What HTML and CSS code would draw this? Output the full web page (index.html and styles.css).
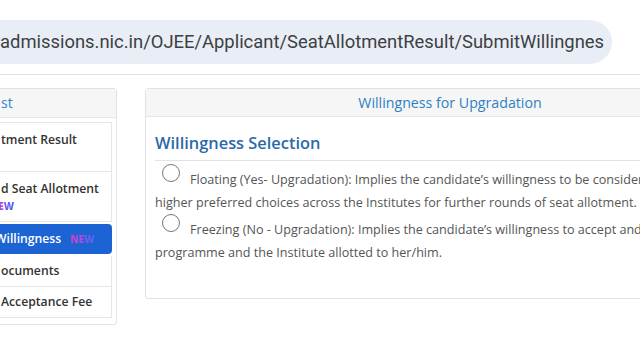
FILE: index.html
```html
<!DOCTYPE html>
<html lang="en">
<head>
  <meta charset="UTF-8">
  <meta name="viewport" content="width=device-width, initial-scale=1.0">
  <title>Submit Willingness</title>
  <link rel="stylesheet" href="styles.css">
</head>
<body>
  <div class="urlbar">
    <span class="url">admissions.nic.in/OJEE/Applicant/SeatAllotmentResult/SubmitWillingnes</span>
  </div>
  <div class="divider"></div>

  <div class="page">
    <aside class="menu">
      <div class="menu-head">st</div>
      <ul class="menu-list">
        <li class="menu-item tall">tment Result</li>
        <li class="menu-item tall">d Seat Allotment<br><span class="badge cut">NEW</span></li>
        <li class="menu-item active"><span class="cut-w">Willingness</span> <span class="badge">NEW</span></li>
        <li class="menu-item">ocuments</li>
        <li class="menu-item">Acceptance Fee</li>
      </ul>
    </aside>

    <section class="card">
      <div class="card-head">Willingness for Upgradation</div>
      <div class="card-body">
        <h3 class="title">Willingness Selection</h3>
        <p class="option">
          <span class="radio"></span>
          Floating (Yes- Upgradation): Implies the candidate’s willingness to be considered for<br>
          higher preferred choices across the Institutes for further rounds of seat allotment.
        </p>
        <p class="option">
          <span class="radio"></span>
          Freezing (No - Upgradation): Implies the candidate’s willingness to accept and retain the<br>
          programme and the Institute allotted to her/him.
        </p>
      </div>
    </section>
  </div>
</body>
</html>
```

FILE: styles.css
```css
* {
  margin: 0;
  padding: 0;
  box-sizing: border-box;
}
html, body {
  width: 640px;
  height: 360px;
  overflow: hidden;
  background: #fff;
}

/* 地址栏 */
.urlbar {
  margin: 20px 0 0 -40px;
  width: 652px;
  height: 44px;
  padding-left: 40px;
  border-radius: 22px;
  background: #e9eef6;
  font: 18.4px/44px Roboto, "Liberation Sans", sans-serif;
  color: #3c4043;
  white-space: nowrap;
}
.divider {
  margin-top: 10px;
  height: 1px;
  background: #dfe1e5;
}

.page {
  display: flex;
  align-items: flex-start;
  gap: 28px;
  padding-top: 13px;
  font-family: "Open Sans", "Noto Sans", sans-serif;
}

/* 左侧菜单 */
.menu {
  flex: none;
  margin-left: -10px;
  width: 127px;
  border: 1px solid #e2e2e2;
  border-radius: 3px;
  white-space: nowrap;
}
.menu-head {
  height: 29px;
  padding-left: 10px;
  font-size: 14px;
  line-height: 27px;
  color: #3585cc;
  background: #f6f6f6;
  border-bottom: 1px solid #e6e6e6;
}
.menu-list {
  list-style: none;
  padding: 4px 4px 6px 0;
}
.menu-item {
  height: 31px;
  padding-left: 9px;
  font-size: 12.2px;
  font-weight: 600;
  line-height: 30px;
  color: #333;
  border: 1px solid #e6e6e6;
  border-top: none;
  overflow: hidden;
}
.menu-item:first-child {
  border-top: 1px solid #e6e6e6;
}
.menu-item.tall {
  height: 50px;
  padding-top: 8px;
  line-height: 17px;
}
.menu-item.active {
  margin: 2px 0;
  height: 30px;
  border: none;
  border-radius: 4px;
  color: #fff;
  background: #1c64d4;
}
.cut-w {
  margin-left: -5px;
}
.badge {
  display: inline-block;
  margin-left: 6px;
  font-size: 10px;
  font-weight: 800;
  line-height: 14px;
  color: transparent;
  background: linear-gradient(90deg, #e23cc2, #a44ce8 50%, #3b6ef0);
  -webkit-background-clip: text;
  background-clip: text;
}
.badge.cut {
  margin-left: -11px;
}

/* 右侧卡片 */
.card {
  flex: none;
  width: 610px;
  border: 1px solid #e2e2e2;
  border-radius: 3px;
}
.card-head {
  height: 28px;
  font-size: 14.2px;
  line-height: 27px;
  text-align: center;
  color: #2f7fc4;
  background: #f6f6f6;
  border-bottom: 1px solid #e6e6e6;
}
.card-body {
  padding: 14px 9px 34px;
  white-space: nowrap;
}
.title {
  padding-bottom: 5px;
  font-size: 16.4px;
  font-weight: 600;
  line-height: 24px;
  color: #2b6aa9;
  border-bottom: 1px solid #e3e3e3;
}
.option {
  position: relative;
  margin-top: 4px;
  text-indent: 35px;
  font-size: 12.6px;
  line-height: 23px;
  color: #555;
}
.title + .option {
  margin-top: 7px;
}
.radio {
  position: absolute;
  top: -4px;
  left: 7px;
  width: 18px;
  height: 18px;
  border: 1px solid #767676;
  border-radius: 50%;
  background: #fff;
}
```
